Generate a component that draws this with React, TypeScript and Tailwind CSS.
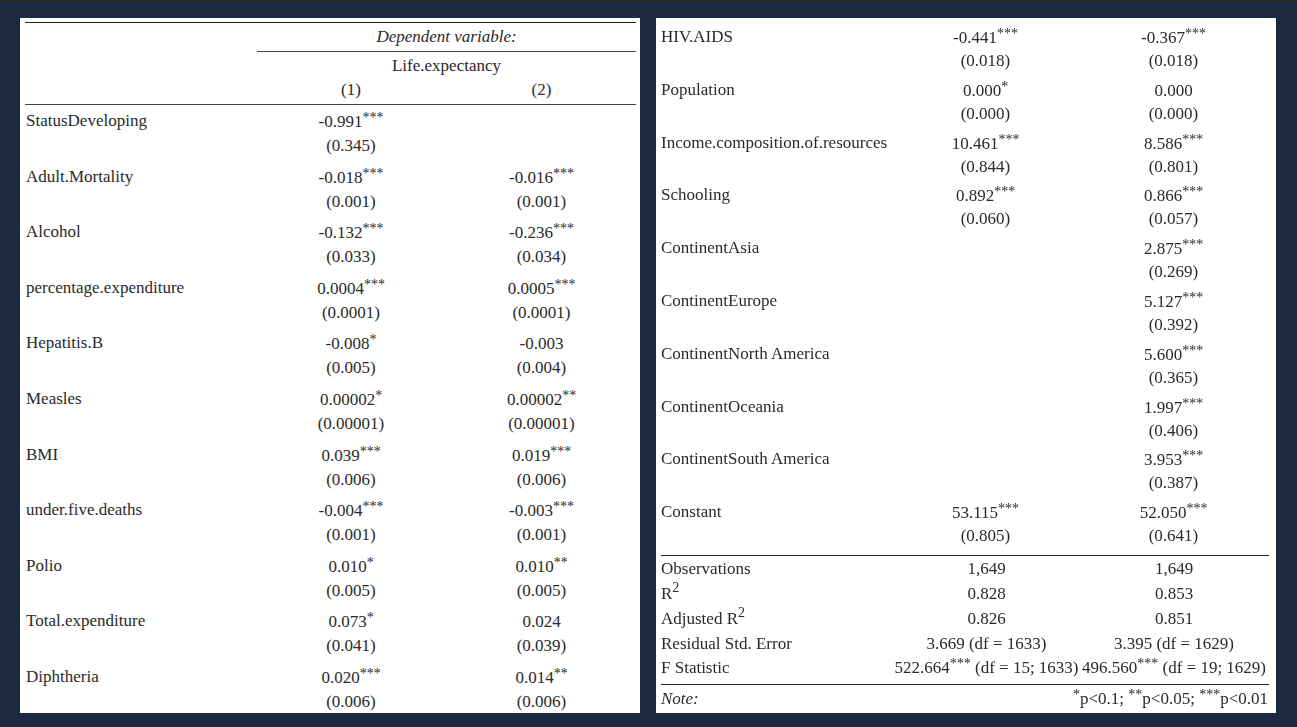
const leftRows = [
  ['StatusDeveloping', '-0.991', '***', '(0.345)', '', '', ''],
  ['Adult.Mortality', '-0.018', '***', '(0.001)', '-0.016', '***', '(0.001)'],
  ['Alcohol', '-0.132', '***', '(0.033)', '-0.236', '***', '(0.034)'],
  ['percentage.expenditure', '0.0004', '***', '(0.0001)', '0.0005', '***', '(0.0001)'],
  ['Hepatitis.B', '-0.008', '*', '(0.005)', '-0.003', '', '(0.004)'],
  ['Measles', '0.00002', '*', '(0.00001)', '0.00002', '**', '(0.00001)'],
  ['BMI', '0.039', '***', '(0.006)', '0.019', '***', '(0.006)'],
  ['under.five.deaths', '-0.004', '***', '(0.001)', '-0.003', '***', '(0.001)'],
  ['Polio', '0.010', '*', '(0.005)', '0.010', '**', '(0.005)'],
  ['Total.expenditure', '0.073', '*', '(0.041)', '0.024', '', '(0.039)'],
  ['Diphtheria', '0.020', '***', '(0.006)', '0.014', '**', '(0.006)'],
]

const rightRows = [
  ['HIV.AIDS', '-0.441', '***', '(0.018)', '-0.367', '***', '(0.018)'],
  ['Population', '0.000', '*', '(0.000)', '0.000', '', '(0.000)'],
  ['Income.composition.of.resources', '10.461', '***', '(0.844)', '8.586', '***', '(0.801)'],
  ['Schooling', '0.892', '***', '(0.060)', '0.866', '***', '(0.057)'],
  ['ContinentAsia', '', '', '', '2.875', '***', '(0.269)'],
  ['ContinentEurope', '', '', '', '5.127', '***', '(0.392)'],
  ['ContinentNorth America', '', '', '', '5.600', '***', '(0.365)'],
  ['ContinentOceania', '', '', '', '1.997', '***', '(0.406)'],
  ['ContinentSouth America', '', '', '', '3.953', '***', '(0.387)'],
  ['Constant', '53.115', '***', '(0.805)', '52.050', '***', '(0.641)'],
]

function Stars({ s }: { s: string }) {
  if (!s) return null
  return <sup className="text-[14px] leading-none top-[-5px]">{s}</sup>
}

function LeftRow({ r }: { r: string[] }) {
  return (
    <div className="grid grid-cols-[231px_190px_191px] h-[55.6px]">
      <div className="pl-[1px] leading-[27px]">{r[0]}</div>
      <div className="text-center">
        <div className="h-[27px] leading-[29px]">{r[1]}<Stars s={r[2]} /></div>
        <div className="leading-[23px]">{r[3]}</div>
      </div>
      <div className="text-center">
        <div className="h-[27px] leading-[29px]">{r[4]}<Stars s={r[5]} /></div>
        <div className="leading-[23px]">{r[6]}</div>
      </div>
    </div>
  )
}

function RightRow({ r }: { r: string[] }) {
  return (
    <div className="grid grid-cols-[232px_185px_191px] h-[52.8px]">
      <div className="leading-[25px]">{r[0]}</div>
      <div className="text-center">
        <div className="h-[25px] leading-[27px]">{r[1]}<Stars s={r[2]} /></div>
        <div className="leading-[23px]">{r[3]}</div>
      </div>
      <div className="text-center">
        <div className="h-[25px] leading-[27px]">{r[4]}<Stars s={r[5]} /></div>
        <div className="leading-[23px]">{r[6]}</div>
      </div>
    </div>
  )
}

function StatRow({ label, a, b, h }: { label: React.ReactNode; a: React.ReactNode; b: React.ReactNode; h: string }) {
  return (
    <div className={`grid grid-cols-[233px_185px_190px] ${h} items-center`}>
      <div>{label}</div>
      <div className="text-center whitespace-nowrap">{a}</div>
      <div className="text-center whitespace-nowrap">{b}</div>
    </div>
  )
}

export default function App() {
  return (
    <div className="h-[727px] overflow-hidden bg-[#1b2a41] border-t-2 border-[#2a2a2a] font-['Liberation_Serif',serif] text-[17px] text-[#2a2a2a]">
      <div className="flex gap-[16px] pl-[20px] pt-[16px] blur-[0.35px]">
        {/* Left half of the regression table */}
        <div className="w-[620px] h-[695px] bg-white pl-[5px] pr-[4px] pt-[4px] overflow-hidden">
          <div className="border-t-[1.5px] border-[#222]">
            <div className="grid grid-cols-[232px_1fr]">
              <div />
              <div>
                <div className="text-center italic h-[29px] leading-[27px] border-b-[1.5px] border-[#444]">Dependent variable:</div>
                <div className="text-center h-[27px] leading-[27px]">Life.expectancy</div>
              </div>
            </div>
            <div className="grid grid-cols-[231px_190px_191px] h-[26px] leading-[22px] text-center border-b-[1.5px] border-[#444]">
              <div />
              <div>(1)</div>
              <div>(2)</div>
            </div>
          </div>
          <div className="pt-[2px]">
            {leftRows.map((r) => (
              <LeftRow key={r[0]} r={r} />
            ))}
          </div>
        </div>

        {/* Right half */}
        <div className="w-[620px] h-[695px] bg-white pl-[5px] pr-[7px] pt-[6px] overflow-hidden">
          {rightRows.map((r) => (
            <RightRow key={r[0]} r={r} />
          ))}
          <div className="border-t-[1.5px] border-[#222] mt-[3px]">
            <StatRow label="Observations" a="1,649" b="1,649" h="h-[22px] mb-[3px]" />
            <StatRow label={<>R<sup className="text-[14px]">2</sup></>} a="0.828" b="0.853" h="h-[25px]" />
            <StatRow label={<>Adjusted R<sup className="text-[14px]">2</sup></>} a="0.826" b="0.851" h="h-[25px]" />
            <StatRow label="Residual Std. Error" a="3.669 (df = 1633)" b="3.395 (df = 1629)" h="h-[24px]" />
            <StatRow
              label="F Statistic"
              a={<>522.664<Stars s="***" /> (df = 15; 1633)</>}
              b={<>496.560<Stars s="***" /> (df = 19; 1629)</>}
              h="h-[26px]"
            />
          </div>
          <div className="border-t-[1.5px] border-[#222] mt-[3px] flex justify-between h-[29px] items-center pr-[1px]">
            <span className="italic">Note:</span>
            <span><Stars s="*" />p&lt;0.1; <Stars s="**" />p&lt;0.05; <Stars s="***" />p&lt;0.01</span>
          </div>
        </div>
      </div>
    </div>
  )
}
